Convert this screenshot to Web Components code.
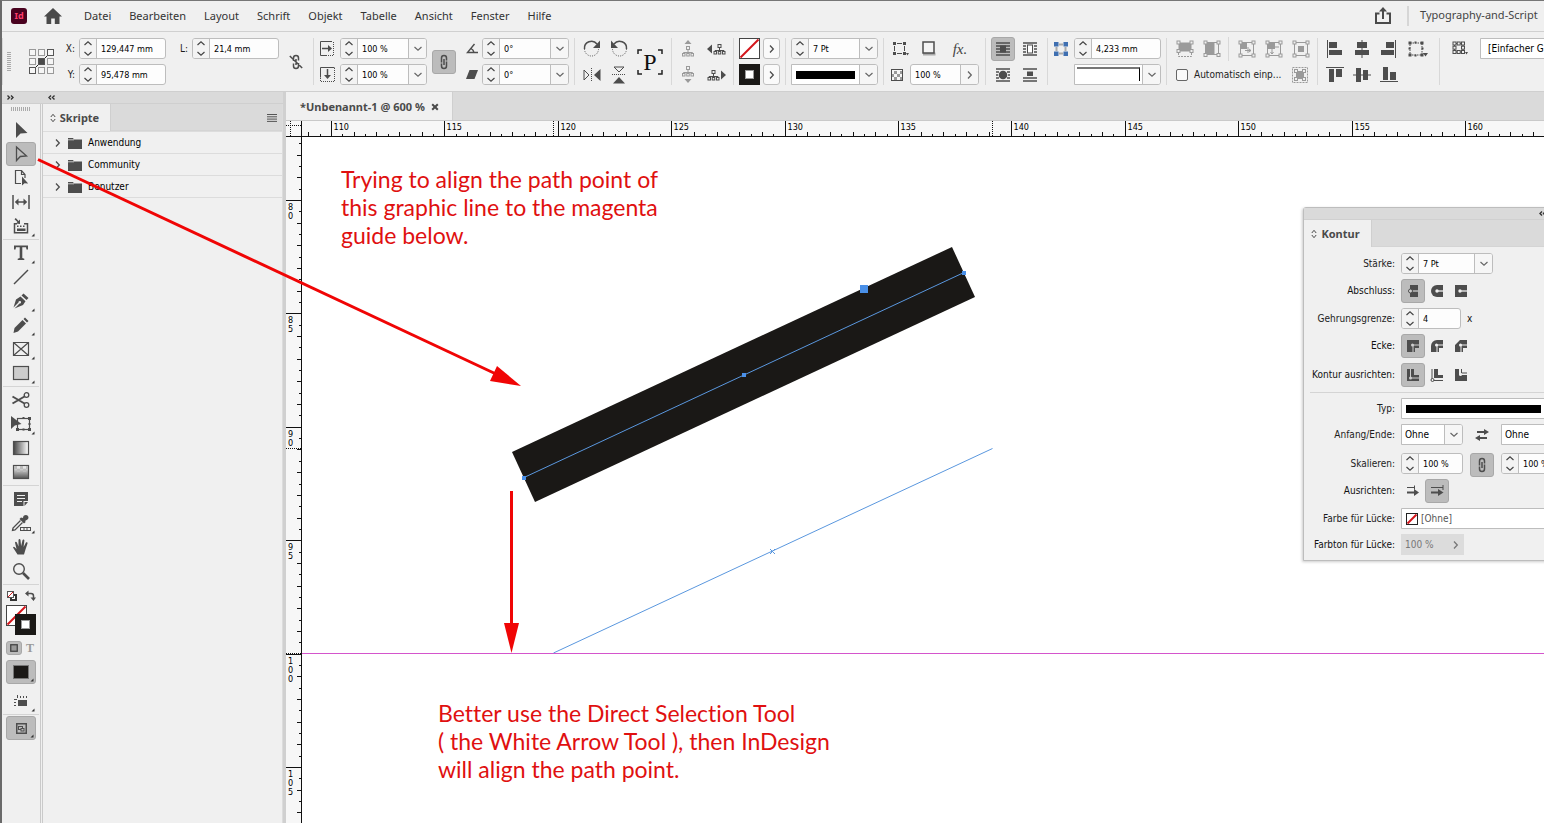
<!DOCTYPE html>
<html lang="de">
<head>
<meta charset="utf-8">
<title>InDesign</title>
<style>
html,body{margin:0;height:100%}
body{background:#f0f0f0;overflow:hidden}
</style>
</head>
<body>
<layout-app></layout-app>
<script>
const BASE = `
*{box-sizing:border-box}
:host{display:block;font-family:"DejaVu Sans Condensed","Liberation Sans",sans-serif;font-size:10px;line-height:14px;color:#1c1c1c}
button,input,select{font:inherit;color:inherit;margin:0;padding:0;border:0;background:none;border-radius:0;outline:0}
button{display:flex;align-items:center;justify-content:center;flex:none}
`;
function define(tag, css, html) {
  const tpl = document.createElement('template');
  if (typeof html === 'string') tpl.innerHTML = `<style>${BASE}${css}</style>${html}`;
  customElements.define(tag, class extends HTMLElement {
    constructor() { super(); this.attachShadow({mode: 'open'}); }
    connectedCallback() {
      if (this.shadowRoot.childNodes.length) return;
      if (typeof html === 'function') this.shadowRoot.innerHTML = `<style>${BASE}${css}</style>${html(this)}`;
      else this.shadowRoot.append(tpl.content.cloneNode(true));
    }
  });
}

/* ---------- icons: [width, height, content] ---------- */
const S = 'fill="none" stroke="currentColor"';
const knob = (pts) => pts.map(([x, y]) => `<rect x="${x - 1.5}" y="${y - 1.5}" width="3" height="3" fill="#f0f0f0" stroke="currentColor"/>`).join('');
const tree = (x, y) => `<g transform="translate(${x} ${y})" ${S}><rect x="4.5" y=".5" width="3" height="3"/><path d="M6 4v2.500M1.500 8V6.500h9V8M6 6.500V8"/><rect x=".5" y="7.500" width="2.500" height="2.500"/><rect x="4.750" y="7.500" width="2.500" height="2.500"/><rect x="9" y="7.500" width="2.500" height="2.500"/></g>`;
const ICONS = {
  up: [8, 5, `<path ${S} stroke-width="1.200" d="M.5 4L4 .8 7.500 4"/>`],
  down: [8, 5, `<path ${S} stroke-width="1.200" d="M.5 1L4 4.200 7.500 1"/>`],
  right: [5, 8, `<path ${S} stroke-width="1.300" d="M1 .5L4.300 4 1 7.500"/>`],
  collapse: [7, 5, `<path ${S} stroke-width="1.400" d="M3 .5L1 2.500l2 2M6.500 .5l-2 2 2 2"/>`],
  expand: [7, 5, `<path ${S} stroke-width="1.400" d="M.5 .5l2 2-2 2M4 .5l2 2-2 2"/>`],
  updown: [6, 10, `<path ${S} d="M.8 4L3 1.300 5.200 4M.8 6L3 8.700 5.200 6"/>`],
  home: [18, 16, `<path fill="currentColor" d="M9 0L0 8.500h2.500V16h4.700v-5.500h3.600V16h4.700V8.500H18z"/>`],
  share: [16, 18, `<path ${S} stroke-width="2" d="M4.500 6.500H1V16h14V6.500h-3.500M8 12V2"/><path fill="currentColor" d="M8 0l4 4.500H4z"/>`],
  gripv: [4, 20, Array.from({length: 10}, (_, i) => `<path stroke="#aaa" d="M0 ${i * 2 + .5}h4"/>`).join('')],
  griph: [20, 4, Array.from({length: 10}, (_, i) => `<path stroke="#aaa" d="M${i * 2 + .5} 0v4"/>`).join('')],
  refpt: [25, 25, `<path stroke="currentColor" d="M5 20L20 5"/>` + [0, 1, 2].flatMap(r => [0, 1, 2].map(c => `<rect x="${c * 9 + .5}" y="${r * 9 + .5}" width="6" height="6" fill="${r === 1 && c === 1 ? '#4a4a4a' : '#f6f6f6'}" stroke="${r + c === 2 ? '#555' : '#999'}"/>`)).join('')],
  unlink: [14, 16, `<path ${S} stroke-width="1.500" d="M4.500 7V4a2.500 2.500 0 015 0v2.500M9.500 9v3a2.500 2.500 0 01-5 0V9.500M7 5v6M.8 2l12.400 12"/>`],
  link: [10, 16, `<path ${S} stroke-width="1.500" d="M2.500 8.500V4a2.500 2.500 0 015 0v2.500M7.500 7.500V12a2.500 2.500 0 01-5 0V9.500M5 5v6"/>`],
  scalex: [15, 15, `<path ${S} d="M12 .5H.5v14H6"/><path ${S} stroke-dasharray="1 1" d="M13.500 1v13.500M6 14.500h8"/><path ${S} stroke-width="1.500" d="M2 7.500h7"/><path fill="currentColor" d="M8 4l4 3.500L8 11z"/>`],
  scaley: [15, 15, `<path ${S} d="M14.500 .5H.5v10"/><path ${S} stroke-dasharray="1 1" d="M.5 11v3.500h14V1"/><path ${S} stroke-width="1.500" d="M7.500 2v7"/><path fill="currentColor" d="M4 8l3.500 4L11 8z"/>`],
  angle: [12, 11, `<path ${S} stroke-width="1.400" d="M8.500 1L1.500 9.500H12M5 5.500a6 6 0 013 4"/>`],
  shear: [12, 11, `<path fill="currentColor" d="M3.500 1h8.500L8.500 10H0z"/>`],
  rotcw: [18, 17, `<path ${S} stroke-width="1.500" d="M1.500 9A7 7 0 0114 4"/><path ${S} stroke-dasharray="1 1.300" d="M1.500 9a7 7 0 0014 0"/><path fill="currentColor" d="M17 .5V8h-7z"/>`],
  rotccw: [18, 17, `<path ${S} stroke-width="1.500" d="M16.500 9A7 7 0 004 4"/><path ${S} stroke-dasharray="1 1.300" d="M16.500 9a7 7 0 01-14 0"/><path fill="currentColor" d="M1 .5V8h7z"/>`],
  fliph: [18, 14, `<path ${S} d="M1 2v10l5-5z"/><path ${S} stroke-dasharray="1 1" d="M8.500 0v14"/><path fill="currentColor" d="M17.500 1v12l-6.500-6z"/>`],
  flipv: [14, 18, `<path ${S} d="M2 1h10L7 6z"/><path ${S} stroke-dasharray="1 1" d="M0 8.500h14"/><path fill="currentColor" d="M1 17.500h12L7 11z"/>`],
  corners: [26, 26, `<path fill="none" stroke="#222" stroke-width="1.500" d="M1 5V1h4M21 1h4v4M25 21v4h-4M5 25H1v-4"/>`],
  treeup: [14, 17, `<path fill="currentColor" d="M3.500 4L7 0l3.500 4z"/>` + tree(1, 6)],
  treedown: [14, 17, tree(1, 0) + `<path fill="currentColor" d="M3.500 13L7 17l3.500-4z"/>`],
  treeleft: [19, 12, `<path fill="currentColor" d="M5 1.500L0 6l5 4.500z"/>` + tree(6.5, 1)],
  treeright: [19, 12, tree(.5, 1) + `<path fill="currentColor" d="M14 1.500L19 6l-5 4.500z"/>`],
  none: [21, 21, `<rect x=".5" y=".5" width="20" height="20" fill="#fff" stroke="#444"/><path stroke="#d4151b" stroke-width="2" d="M1.500 19.500l18-18"/>`],
  nonesm: [12, 12, `<rect x=".5" y=".5" width="11" height="11" fill="#fff" stroke="#222"/><path stroke="#d4151b" stroke-width="2" d="M1.500 10.500l9-9"/>`],
  stroke: [21, 21, `<rect width="21" height="21" fill="#1a1816"/><rect x="6.500" y="6.500" width="8" height="8" fill="#fff" stroke="#999"/>`],
  cornopt: [16, 14, `<path ${S} d="M4 1.500h5M11.500 4v5M4 11.500h5M1.500 4v5"/><path fill="currentColor" d="M0 0h3v3H0zM10 0h3v3h-3zM0 10h3v3H0zM10 10h3v3h-3zM13 11h3l-1.500 2.500z"/>`],
  shadow: [14, 15, `<rect x="1" y="11.500" width="12.500" height="3" fill="#aaa"/><rect x="1" y="1" width="11" height="11" fill="#f4f4f4" stroke="currentColor" stroke-width="1.500"/>`],
  check: [12, 12, `<rect x=".5" y=".5" width="11" height="11" fill="#f6f6f6" stroke="currentColor"/><path fill="#999" d="M3 2h3v3H3zM6 5h3v3H6zM1 5h2v3H1zM9 2h2v3H9zM3 8h3v3H3zM9 8h2v3H9z"/>`],
  wrap1: [14, 14, `<path stroke="currentColor" stroke-width="1.300" d="M0 1h14M0 4h14M0 7h14M0 10h14M0 13h14"/><rect x="4" y="3.500" width="6" height="7" fill="currentColor"/>`],
  wrap2: [14, 14, `<path stroke="currentColor" stroke-width="1.300" d="M0 1h14M0 4h3M11 4h3M0 7h3M11 7h3M0 10h3M11 10h3M0 13h14"/><rect x="4.500" y="3" width="5" height="8" fill="#fff" stroke="currentColor"/>`],
  wrap3: [14, 14, `<path stroke="currentColor" stroke-width="1.300" d="M0 1h14M0 4h3M11 4h3M0 7h2M12 7h2M0 10h3M11 10h3M0 13h14"/><circle cx="7" cy="7" r="4.300" fill="currentColor"/>`],
  wrap4: [14, 14, `<path stroke="currentColor" stroke-width="1.300" d="M0 1h14M0 10h14M0 13h14"/><path fill="currentColor" d="M4 3.500h6V8H4z"/>`],
  fitbox: [14, 14, `<path stroke="#aaa" stroke-width="2" fill="none" d="M5 2.500h4M5 11.500h4M2.500 5v4M11.500 5v4"/><path fill="#3f6fb0" d="M0 0h4.500v4.500H0zM9.500 0H14v4.500H9.500zM0 9.500h4.500V14H0zM9.500 9.500H14V14H9.500z"/>`],
  fit1: [16, 16, `<rect x="1.500" y="1.500" width="13" height="9" fill="currentColor"/>` + knob([[1.5, 1.5], [14.5, 1.5], [1.5, 10], [14.5, 10]]) + `<path ${S} stroke-dasharray="2 1" d="M1.500 12v3.500h13V12"/>`],
  fit2: [16, 16, `<rect x="1.500" y="1.500" width="9" height="12" fill="currentColor"/><rect x="1.500" y="1.500" width="13" height="12" ${S}/>` + knob([[1.5, 1.5], [14.5, 1.5], [1.5, 14], [14.5, 14]])],
  fit3: [16, 16, `<path fill="currentColor" d="M2 2h6v6H2z"/><rect x="1.500" y="1.500" width="13" height="13" ${S}/><path ${S} d="M6 9.500h6M9 6v6M10 8l2 1.500L10 11"/>` + knob([[1.5, 1.5], [14.5, 1.5], [1.5, 14.5], [14.5, 14.5]])],
  fit4: [16, 16, `<path fill="currentColor" d="M2 2h7v6H2z"/><rect x="1.500" y="1.500" width="13" height="13" ${S}/><path ${S} d="M6 8v5M4.500 11L6 13l1.500-2M9 6h4"/>` + knob([[1.5, 1.5], [14.5, 1.5], [1.5, 14.5], [14.5, 14.5]])],
  fit5: [16, 16, `<path fill="currentColor" d="M5 5h6v6H5z"/><rect x="1.500" y="1.500" width="13" height="13" ${S}/>` + knob([[1.5, 1.5], [14.5, 1.5], [1.5, 14.5], [14.5, 14.5]])],
  fit6: [16, 16, `<rect x=".5" y=".5" width="15" height="15" ${S} stroke-dasharray="2 1"/><path fill="currentColor" d="M4 4h8v8H4z"/>` + knob([[4, 4], [12, 4], [4, 12], [12, 12]])],
  all: [15, 18, `<path stroke="currentColor" d="M.5 0v18"/><path fill="currentColor" d="M2 2h8v6H2zM2 10h13v5H2z"/>`],
  ahc: [14, 18, `<path stroke="currentColor" d="M7 0v18"/><path fill="currentColor" d="M2 2h10v6H2zM0 10h14v5H0z"/>`],
  alr: [15, 18, `<path stroke="currentColor" d="M14.500 0v18"/><path fill="currentColor" d="M5 2h8v6H5zM0 10h13v5H0z"/>`],
  alt: [18, 15, `<path stroke="currentColor" d="M0 .5h18"/><path fill="currentColor" d="M3 2h5v13H3zM10 2h6v8h-6z"/>`],
  avc: [18, 14, `<path stroke="currentColor" d="M0 7h18"/><path fill="currentColor" d="M3 0h5v14H3zM10 2h5v10h-5z"/>`],
  alb: [18, 15, `<path stroke="currentColor" d="M0 14.500h18"/><path fill="currentColor" d="M3 0h5v13H3zM10 5h6v8h-6z"/>`],
  alignto: [20, 16, `<rect x="2" y="2" width="12" height="12" ${S} stroke-dasharray="1.500 1"/><path fill="currentColor" d="M.5 .5h3v3h-3zM12.500 .5h3v3h-3zM.5 12.500h3v3h-3zM12.500 12.500h3v3h-3zM6.500 .5h2v2h-2zM6.500 13.500h2v2h-2zM.5 6.500h2v2h-2zM13.500 6.500h2v2h-2zM15 12h5l-2.500 3.500z"/>`],
  objstyle: [15, 13, `<g ${S}><rect x="1.500" y="1.500" width="8.500" height="8.500"/></g>` + knob([[1.5, 1.5], [5.7, 1.5], [10, 1.5], [1.5, 5.7], [10, 5.7], [1.5, 10], [5.7, 10], [10, 10]]) + `<path fill="currentColor" d="M12 10h3l-1.500 2.500z"/>`],
  menu: [10, 8, `<path stroke="currentColor" d="M0 .5h10M0 2.800h10M0 5.100h10M0 7.400h10"/>`],
  folder: [14, 11, `<path fill="currentColor" d="M0 0h5l1 1.500h8V11H0z"/><path stroke="#e8e8e8" d="M0 1.800h6" stroke-width=".8"/>`],
  close: [8, 8, `<path stroke="currentColor" stroke-width="2" d="M1.200 1.200l5.600 5.600M6.800 1.200L1.200 6.800"/>`],
  /* tools */
  t_select: [18, 18, `<path fill="currentColor" d="M4 1v16l4.500-4.500L15.500 12z"/>`],
  t_direct: [18, 18, `<path ${S} stroke-width="1.300" d="M4.500 2v13.500l3.800-4 6.200-.5z"/>`],
  t_page: [18, 18, `<path ${S} stroke-width="1.200" d="M9 14.500H3.500v-13h6l3.500 4V9M9.500 1.500V5.500H13"/><path fill="currentColor" d="M10 7.500v9l2.500-2.300 3.700.3z"/>`],
  t_gap: [18, 16, `<path ${S} stroke-width="1.500" d="M1 1v14M17 1v14M4 8h10"/><path fill="currentColor" d="M6.500 4.500L2.800 8l3.700 3.500zM11.500 4.500L15.200 8l-3.700 3.500z"/>`],
  t_content: [18, 18, `<path ${S} stroke-width="1.500" d="M5 6.800H2.500v9h13v-9H12"/><path fill="currentColor" d="M5 8.500h1.500V10H5zM8 8.500h1.500V10H8zM11 8.500h1.500V10H11zM5 11.500h8.500V14H5zM8 7V2.500L6.500 4 3.800 1 2.500 2.300l3 2.700L4 6.500z"/>`],
  t_type: [18, 18, `<path fill="currentColor" d="M2 1.500h14v4h-1.500L14 3.300h-3.700V14l2 .7V16H5.700v-1.300l2-.7V3.300H4L3.500 5.500H2z"/>`],
  t_line: [18, 18, `<path stroke="currentColor" stroke-width="1.500" d="M2 16L16 2"/>`],
  t_pen: [18, 18, `<path fill="currentColor" d="M11.500 1.500l5 4.500-2 2-5-4.500zM8.500 4.500l5 4.800L11 13l-8.500 3.500 5-5a1.300 1.300 0 10-1-1L1.500 15.500 4 7.500z"/>`],
  t_pencil: [18, 18, `<path fill="currentColor" d="M13 1.500L16.500 5 15 6.500 11.500 3zM10.500 4L14 7.500 6 15.500 1.500 17 2.500 12z"/>`],
  t_frame: [18, 18, `<path ${S} stroke-width="1.200" d="M1.500 2.500h15v13h-15zM1.500 2.500l15 13M16.500 2.500l-15 13"/>`],
  t_rect: [18, 18, `<rect x="1.500" y="2.500" width="15" height="13" fill="#ccc" stroke="currentColor" stroke-width="1.200"/>`],
  t_scis: [18, 18, `<g ${S} stroke-width="1.300"><circle cx="14.500" cy="4" r="2.300"/><circle cx="14.500" cy="14" r="2.300"/></g><path ${S} stroke-width="2" d="M.5 5.500l12 7M.5 12.500l12-7"/>`],
  t_free: [20, 18, `<rect x="6.500" y="3.500" width="12" height="11" ${S} stroke-width="1.200"/><path fill="currentColor" d="M17 2h3v3h-3zM17 13h3v3h-3zM5 13h3v3H5zM11.500 2h2v2h-2zM11.500 13.500h2v2h-2zM17.500 8h2v2h-2zM0 1v13l3.800-3.500L10.500 9z"/>`],
  t_grad: [18, 18, `<defs><linearGradient id="g"><stop stop-color="#444"/><stop offset="1" stop-color="#fff"/></linearGradient></defs><rect x="1.500" y="2.500" width="15" height="13" fill="url(#g)" stroke="currentColor" stroke-width="1.200"/>`],
  t_feather: [18, 18, `<defs><linearGradient id="h" x2="0" y2="1"><stop stop-color="#fff"/><stop offset="1" stop-color="#555"/></linearGradient></defs><rect x="1.500" y="2.500" width="15" height="13" fill="url(#h)" stroke="currentColor" stroke-width="1.200"/><path fill="#bbb" d="M2 3h3v3H2zM8 3h3v3H8zM14 3h2v3h-2zM5 6h3v3H5zM11 6h3v3h-3z"/>`],
  t_note: [18, 18, `<path fill="currentColor" d="M2 2h14v9h-4.500v5H2zM12.500 12H16l-3.500 4z"/><path stroke="#f0f0f0" stroke-width="1.200" d="M5 5.500h8M5 8.500h8M5 11.500h5"/>`],
  t_eye: [20, 18, `<path fill="currentColor" d="M12 4a3 3 0 013-3 2.500 2.500 0 011.500 4.500L14 7l.7 1-1.700 1.500L8.500 5 10 3.500z"/><path ${S} stroke-width="1.300" d="M9.500 6.500L2 14l-.5 2.500L4 16l7.500-7.500"/><rect x="9.500" y="13.500" width="10" height="3" fill="#f0f0f0" stroke="currentColor"/><path stroke="currentColor" d="M13 13v4M16 13v4"/>`],
  t_hand: [18, 18, `<path fill="currentColor" d="M5.500 16.500L1 9.500c.5-1 1.500-.7 2 0l1.500 1.500L3 4.500c.3-1.300 1.500-1 1.900 0L6.500 8.500 6.500 2c.3-1.300 1.800-1.300 2 0l.6 6L10.500 2.200c.5-1.200 1.900-.8 1.900.4L11.600 9l2.200-4.200c.7-1 2-.4 1.700.7L13.500 11.500l-1.500 5z"/>`],
  t_zoom: [18, 18, `<circle cx="7" cy="7" r="5.300" ${S} stroke-width="1.400"/><path stroke="currentColor" stroke-width="2.600" d="M11 11l6 6"/>`],
  swatchsm: [10, 10, `<rect x="4" y="4" width="5" height="5" fill="#fff" stroke="#333" stroke-width="2"/><rect x=".5" y=".5" width="6" height="6" fill="#fff" stroke="#555"/><path stroke="#d4151b" d="M1 6l5-5"/>`],
  swap: [11, 11, `<path ${S} stroke-width="1.500" d="M3 3.500h3q2.500 0 2.500 2.500v2"/><path fill="currentColor" d="M3.500 .5v6L0 3.500zM5.500 7.500H11L8.500 11z"/>`],
  contain: [8, 8, `<rect x=".75" y=".75" width="6.500" height="6.500" fill="#999" stroke="#444" stroke-width="1.300"/>`],
  black: [16, 14, `<rect x=".5" y=".5" width="15" height="13" fill="#1a1816" stroke="#777"/>`],
  viewmode: [14, 12, `<path fill="currentColor" d="M4 5h9v6H4zM0 4h3v1H0zM0 7h2v1H0zM0 10h2v1H0zM3 0h1v3H3zM6 1h1v2H6zM9 1h1v2H9zM12 1h1v2h-1z"/>`],
  present: [11, 11, `<rect x=".75" y=".75" width="9.500" height="9.500" ${S} stroke-width="1.500"/><rect x="2.500" y="3.500" width="4" height="3" ${S}/><rect x="5" y="5.500" width="3" height="2.500" fill="#bbb" stroke="currentColor"/>`],
  corner: [4, 4, `<path fill="#333" d="M3.500 .5v3h-3z"/>`],
  /* stroke panel */
  cap1: [12, 14, `<path fill="currentColor" d="M3 1h8v12H3z"/><path stroke="#ccc" stroke-width="1.300" d="M4 7h7"/><path fill="#bcbcbc" d="M0 4.500h3v5H0z"/><circle cx="3.500" cy="7" r="2" fill="#ccc" stroke="currentColor"/>`],
  cap2: [12, 14, `<path fill="currentColor" d="M12 1v12H6A6 6 0 016 1z"/><path stroke="#f0f0f0" stroke-width="1.300" d="M6 7h6"/><circle cx="6" cy="7" r="1.700" fill="#f0f0f0"/>`],
  cap3: [12, 14, `<path fill="currentColor" d="M0 1h12v12H0z"/><path stroke="#f0f0f0" stroke-width="1.300" d="M5 7h7"/><circle cx="5" cy="7" r="1.700" fill="#f0f0f0"/>`],
  join1: [12, 14, `<path fill="currentColor" d="M0 1h12v8H8v4H0z"/><path fill="none" stroke="#ccc" d="M6 13V6h6"/><circle cx="5.500" cy="6" r="1.500" fill="#ccc"/>`],
  join2: [12, 14, `<path fill="currentColor" d="M6 1h6v8H8v4H0V7a6 6 0 016-6z"/><path fill="none" stroke="#f0f0f0" d="M6 13V6h6"/><circle cx="5.500" cy="6" r="1.500" fill="#f0f0f0"/>`],
  join3: [12, 14, `<path fill="currentColor" d="M5 1h7v8H8v4H0V6z"/><path fill="none" stroke="#f0f0f0" d="M6 13V6h6"/><circle cx="5.500" cy="6" r="1.500" fill="#f0f0f0"/>`],
  al1: [12, 14, `<path fill="currentColor" d="M0 1h7v6h5v6H0z"/><path fill="none" stroke="#ccc" d="M3.500 1v9H12"/><circle cx="3.500" cy="10" r="1.500" fill="#ccc"/>`],
  al2: [12, 14, `<path fill="currentColor" d="M3 1h4v6h5v3H3z"/><path fill="none" stroke="currentColor" d="M1 1v11.500h11"/><circle cx="1.500" cy="12" r="1.500" fill="#f0f0f0" stroke="currentColor"/>`],
  al3: [12, 14, `<path fill="currentColor" d="M0 1h4v6h8v6H0z"/><path fill="none" stroke="currentColor" d="M6.500 1v4H12"/><circle cx="5.500" cy="6.500" r="1.500" fill="#f0f0f0"/>`],
  swaph: [14, 12, `<path ${S} stroke-width="2" d="M2 3h8M4 9h8"/><path fill="currentColor" d="M9 0l5 3-5 3zM5 6L0 9l5 3z"/>`],
  arr1: [12, 12, `<path ${S} d="M0 2.500h7M7.500 .5v4"/><path ${S} stroke-width="2" d="M0 7.500h8"/><path fill="currentColor" d="M7 4l5 3.500L7 11z"/>`],
  arr2: [13, 12, `<path ${S} d="M0 2.500h12M12 0v5"/><path ${S} stroke-width="2" d="M0 7.500h8"/><path fill="currentColor" d="M7 4l5.500 3.500L7 11z"/>`]
};
define('ui-icon', ':host{display:block;flex:none;color:inherit}svg{display:block;overflow:visible}',
  el => { const [w, h, c] = ICONS[el.getAttribute('name')]; return `<svg width="${w}" height="${h}" viewBox="0 0 ${w} ${h}" aria-hidden="true">${c}</svg>`; });
const I = n => `<ui-icon name="${n}"></ui-icon>`;

/* ---------- number / list field ---------- */
define('num-field', `
:host{display:flex;align-items:center;height:21px}
label{flex:none;width:var(--lw);padding-right:var(--lp,4px);text-align:right;white-space:nowrap}
.box{display:flex;flex:none;width:var(--fw,87px);height:21px;border:1px solid #bdbdbd;border-radius:3px;background:#fdfdfd;overflow:hidden}
.spin{display:flex;flex-direction:column;flex:none;width:17px;border-right:1px solid #bdbdbd;background:#f3f3f3;color:#444}
.spin button{flex:1;width:16px}
input{flex:1;min-width:0;padding-left:4px;font-size:9px;color:#000}
.more{width:18px;border-left:1px solid #bdbdbd;background:#f6f6f6;color:#666}
`, el => {
  const a = n => el.getAttribute(n), cap = a('caption');
  return `${cap ? `<label for="f">${cap}</label>` : ''}<div class="box">${el.hasAttribute('plain') ? '' : `<div class="spin"><button aria-label="Erhöhen">${I('up')}</button><button aria-label="Verringern">${I('down')}</button></div>`}<input id="f" value="${a('value')}"${cap ? '' : ` aria-label="${a('label')}"`}>${a('more') ? `<button class="more" aria-label="Auswahl">${I(a('more'))}</button>` : ''}</div>`;
});
define('list-box', `
:host{display:flex;align-items:center;height:21px}
label{flex:none;width:var(--lw);padding-right:var(--lp,4px);text-align:right;white-space:nowrap}
.box{position:relative;display:flex;flex:none;width:var(--fw,87px);height:21px;border:1px solid #bdbdbd;border-radius:0 3px 3px 0;background:#fff;overflow:hidden}
select{appearance:none;flex:1;min-width:0;padding-left:var(--pl,3px);height:19px;color:var(--fg,#000)}
.more{display:flex;align-items:center;justify-content:center;width:18px;border-left:1px solid #bdbdbd;background:#f6f6f6;color:#666}
.pic{position:absolute;inset:0 18px 0 0;padding:6px 4px;pointer-events:none}
.bar{height:8px;background:#000}
.pic.corner{padding:2px}
.cor{height:14px;border-top:2px solid #777;border-right:1px solid #000}
.sw{position:absolute;left:4px;top:4px}
`, el => {
  const a = n => el.getAttribute(n), cap = a('caption'), p = a('pic');
  const pic = p === 'bar' ? '<div class="pic"><div class="bar"></div></div>' : p === 'corner' ? '<div class="pic corner"><div class="cor"></div></div>' : p === 'none' ? `<div class="sw">${I('nonesm')}</div>` : '';
  return `${cap ? `<label for="f">${cap}</label>` : ''}<div class="box"><select id="f"${cap ? '' : ` aria-label="${a('label')}"`}><option>${a('value') || ''}</option></select>${pic}${el.hasAttribute('open-end') ? '' : `<span class="more">${I('down')}</span>`}</div>`;
});

/* ---------- menu bar ---------- */
define('menu-bar', `
:host{display:flex;align-items:center;height:31px;padding-left:9px;border-bottom:1px solid #d0d0d0;font:11px/16px "Noto Sans","Open Sans",sans-serif;color:#333}
.logo{width:16px;height:16px;border-radius:3px;background:#49021f;color:#ff3b6b;font-size:9px;font-weight:700;line-height:16px;text-align:center}
.home{margin-left:17px;color:#4a4a4a}
nav{display:flex;gap:18px;margin-left:22px}
.share{margin-left:auto;color:#4a4a4a}
.doc{width:137px;height:20px;margin-left:16px;padding-left:11px;border-left:2px solid #d6d6d6;line-height:18px;white-space:nowrap;color:#444}
`, `<div class="logo">Id</div><button class="home" aria-label="Startseite">${I('home')}</button>
<nav>${['Datei', 'Bearbeiten', 'Layout', 'Schrift', 'Objekt', 'Tabelle', 'Ansicht', 'Fenster', 'Hilfe'].map(t => `<button>${t}</button>`).join('')}</nav>
<button class="share" aria-label="Freigeben">${I('share')}</button><div class="doc">Typography-and-Script</div>`);

/* ---------- control bar ---------- */
define('control-bar', `
:host{display:flex;height:60px;padding:6px 0;border-bottom:1px solid #cfcfcf;color:#222;overflow:hidden}
section{display:grid;grid-template-rows:21px 21px;row-gap:5px;flex:none;align-items:center;justify-items:center;border-left:1px solid #d8d8d8}
section:first-child{border:0}
section>ui-icon,button,.r>ui-icon{color:#4d4d4d}
.span{grid-row:1/3}
.k1{grid-column:1}.k2{grid-column:2}.k3{grid-column:3}.k5{grid-column:5}
.r{display:flex;align-items:center;justify-self:stretch}
.r>*{flex:none}
.c{display:flex;justify-content:center;width:27px;color:#4d4d4d}
.on{width:24px;height:24px;border:1px solid #a8a8a8;border-radius:3px;background:#bcbcbc}
.go{width:17px;height:21px;border:1px solid #c0c0c0;border-radius:3px;background:#fafafa}
.dim,section>.dim{color:#9a9a9a}
.sep{width:1px;height:24px;margin:0 4px 0 3px;background:#d8d8d8}
.para{display:grid;place-items:center;color:#111;font:24px/26px "Liberation Serif",serif}
.para>*{grid-area:1/1}
.fx{font:italic 15px/16px "Liberation Serif",serif;color:#444;justify-content:center}
input[type=checkbox]{appearance:none;width:12px;height:12px;border:1px solid #666;border-radius:2px;background:#fafafa}
.txt{width:98px;padding-left:6px}
.last{flex:1;min-width:0;overflow:hidden}
`, `
<section style="grid-template-columns:12px 39px 112px 113px 34px">
 <span class="span k1">${I('gripv')}</span><span class="span k2" style="justify-self:end">${I('refpt')}</span>
 <num-field caption="X:" value="129,447 mm" style="--lw:25px"></num-field><num-field caption="L:" value="21,4 mm" style="--lw:26px"></num-field>
 <button class="span k5" aria-label="Proportionen">${I('unlink')}</button>
 <num-field caption="Y:" value="95,478 mm" style="--lw:25px;grid-area:2/3"></num-field>
</section>
<section style="grid-template-columns:26px 87px 34px 21px 87px;padding-right:5px">
 ${I('scalex')}<num-field label="Skalierung X" value="100 %" more="down"></num-field><button class="span k3 on" aria-label="Skalierung verknüpfen">${I('link')}</button>${I('angle')}<num-field label="Drehwinkel" value="0°" more="down"></num-field>
 ${I('scaley')}<num-field label="Skalierung Y" value="100 %" more="down"></num-field>${I('shear')}<num-field label="Scherwinkel" value="0°" more="down"></num-field>
</section>
<section style="grid-template-columns:34px 20px 42px">
 <button aria-label="90° rechts">${I('rotcw')}</button><button aria-label="90° links">${I('rotccw')}</button><div class="span k3 para">${I('corners')}<span>P</span></div>
 <button aria-label="Horizontal spiegeln">${I('fliph')}</button><button aria-label="Vertikal spiegeln">${I('flipv')}</button>
</section>
<section style="grid-template-columns:32px 24px;padding-right:5px">
 <button class="dim" aria-label="Container">${I('treeup')}</button><button aria-label="Zurück">${I('treeleft')}</button>
 <button class="dim" aria-label="Inhalt">${I('treedown')}</button><button aria-label="Weiter">${I('treeright')}</button>
</section>
<section style="grid-template-columns:21px 17px;column-gap:3px;padding:0 5px">
 <button aria-label="Fläche">${I('none')}</button><button class="go" aria-label="Flächenfarbe">${I('right')}</button>
 <button aria-label="Kontur">${I('stroke')}</button><button class="go" aria-label="Konturfarbe">${I('right')}</button>
</section>
<section style="padding:0 5px">
 <num-field label="Konturstärke" value="7 Pt" more="down"></num-field>
 <list-box label="Konturtyp" pic="bar"></list-box>
</section>
<section style="padding:0 6px;width:102px">
 <div class="r"><button style="width:22px" aria-label="Eckenoptionen">${I('cornopt')}</button><button style="width:34px" aria-label="Schlagschatten">${I('shadow')}</button><button class="fx" style="width:28px">fx.</button></div>
 <div class="r"><span class="c" style="width:14px;margin-right:6px">${I('check')}</span><num-field plain label="Deckkraft" value="100 %" more="right" style="--fw:69px"></num-field></div>
</section>
<section style="grid-template-columns:24px 24px;column-gap:3px;padding:0 5px">
 <button class="on" aria-label="Kein Umfluss">${I('wrap1')}</button><button aria-label="Umfluss um Rahmen">${I('wrap2')}</button>
 <button aria-label="Umfluss um Form">${I('wrap3')}</button><button aria-label="Objekt überspringen">${I('wrap4')}</button>
</section>
<section style="grid-template-columns:26px 87px;padding-right:5px">
 ${I('fitbox')}<num-field label="Eckengröße" value="4,233 mm"></num-field>
 <span></span><list-box label="Eckenform" pic="corner"></list-box>
</section>
<section style="padding:0 3px 0 4px">
 <div class="r"><span class="c dim">${I('fit1')}</span><span class="c dim">${I('fit2')}</span><i class="sep"></i><span class="c dim">${I('fit3')}</span><span class="c dim">${I('fit4')}</span><span class="c dim">${I('fit5')}</span></div>
 <div class="r" style="padding-left:5px"><input type="checkbox" id="auto"><label class="txt" for="auto">Automatisch einp...</label><span class="c dim">${I('fit6')}</span></div>
</section>
<section style="grid-template-columns:27px 27px 27px 32px;padding:0 5px 0 3px">
 <button aria-label="Links">${I('all')}</button><button aria-label="Mitte">${I('ahc')}</button><button aria-label="Rechts">${I('alr')}</button><button aria-label="Ausrichten an">${I('alignto')}</button>
 <button aria-label="Oben">${I('alt')}</button><button aria-label="Vertikal Mitte">${I('avc')}</button><button aria-label="Unten">${I('alb')}</button>
</section>
<section class="last" style="grid-template-columns:40px 1fr">
 ${I('objstyle')}<list-box open-end label="Objektformat" value="[Einfacher G" style="--fw:87px;--pl:7px;justify-self:start"></list-box>
</section>`);

/* ---------- tool strip ---------- */
const tool = (n, o = {}) => `<button class="t${o.on ? ' on' : ''}" aria-label="${n}">${I(n)}${o.more ? `<span class="m">${I('corner')}</span>` : ''}</button>`;
define('tool-strip', `
:host{display:flex;flex-direction:column;align-items:center;width:39px;flex:none;border-right:1px solid #cacaca;color:#4d4d4d}
.grip{height:14px;padding-top:3px}
.t{position:relative;width:30px;height:24px;color:#4d4d4d}
.on{border:1px solid #a8a8a8;border-radius:3px;background:#bcbcbc}
.m{position:absolute;right:1px;bottom:1px}
hr{width:36px;height:1px;margin:1px 0;border:0;background:#d4d4d4}
.row{display:flex;width:30px;justify-content:space-between;align-items:center}
.mini{height:19px;padding-left:1px}
.fs{position:relative;width:30px;height:30px}
.fs .s{position:absolute;left:9px;top:9px}
.fmt{height:14px;margin:6px 0 5px}
.fmt button{width:16px;height:14px}
.fmt .tt{color:#999;font:700 12px/14px "Liberation Serif",serif}
.gap{height:5px}
`, `<div class="grip">${I('griph')}</div>
${tool('t_select')}${tool('t_direct', {on: 1})}${tool('t_page')}${tool('t_gap')}${tool('t_content', {more: 1})}<hr>
${tool('t_type', {more: 1})}${tool('t_line')}${tool('t_pen', {more: 1})}${tool('t_pencil', {more: 1})}${tool('t_frame', {more: 1})}${tool('t_rect', {more: 1})}<hr>
${tool('t_scis')}${tool('t_free', {more: 1})}${tool('t_grad')}${tool('t_feather')}<hr>
${tool('t_note')}${tool('t_eye', {more: 1})}${tool('t_hand')}${tool('t_zoom')}<hr>
<div class="row mini">${I('swatchsm')}${I('swap')}</div>
<div class="fs">${I('none')}<span class="s">${I('stroke')}</span></div>
<div class="row fmt"><button class="on" aria-label="Container">${I('contain')}</button><button class="tt">T</button></div>
${tool('black', {on: 1, more: 1})}<div class="gap"></div>${tool('viewmode', {more: 1})}<hr>${tool('present', {on: 1, more: 1})}`);

/* ---------- tab strip shared by panels ---------- */
define('panel-tabs', `
:host{display:flex;height:27px;background:#dadada;border-bottom:1px solid #d4d4d4}
button{gap:4px;width:68px;padding-right:4px;margin-bottom:-1px;background:#f0f0f0;border-right:1px solid #cfcfcf;color:#4a4a4a;font:700 11px/16px "Noto Sans","Open Sans",sans-serif}
.menu{margin:10px 5px 0 auto;color:#555}
`, el => `<button>${I('updown')}<span>${el.getAttribute('name')}</span></button>${el.hasAttribute('menu') ? `<div class="menu">${I('menu')}</div>` : ''}`);

define('scripts-panel', `
:host{flex:1;min-width:0;border-left:1px solid #cacaca;margin-left:1px;border-right:1px solid #dcdcdc}
ul{margin:0;padding:0;list-style:none;border-top:1px solid #dcdcdc}
li{display:flex;align-items:center;height:22px;padding:1px 0 0 12px;border-bottom:1px solid #dcdcdc;color:#000}
li ui-icon{color:#4d4d4d}
li ui-icon+ui-icon{margin:0 6px 0 8px}
`, `<panel-tabs name="Skripte" menu></panel-tabs>
<ul>${['Anwendung', 'Community', 'Benutzer'].map(t => `<li>${I('right')}${I('folder')}${t}</li>`).join('')}</ul>`);

define('side-dock', `
:host{display:flex;flex-direction:column;width:284px;flex:none;border-right:3px solid #d0d0d0}
header{display:flex;align-items:center;gap:34px;height:12px;padding-left:5px;background:#dadada;border-bottom:1px solid #cfcfcf;color:#333}
.cols{display:flex;flex:1;min-height:0}
`, `<header>${I('expand')}${I('collapse')}</header><div class="cols"><tool-strip></tool-strip><scripts-panel></scripts-panel></div>`);

/* ---------- rulers ---------- */
const MM = 22.68;
define('page-ruler', `
:host{background:#f7f7f7;overflow:hidden}
svg{display:block;width:100%;height:100%}
text{font-size:9px;fill:#000}
`, el => {
  const v = el.hasAttribute('vertical'), start = +el.getAttribute('start'), at = +el.getAttribute('at');
  const marks = el.getAttribute('marks').split(' ');
  const end = v ? innerHeight - 137 : innerWidth - 302;
  let s = '';
  for (let i = -12; ; i++) {
    const p = Math.round(at + i * MM / 2) + .5, len = i % 10 === 0 ? 16 : i % 2 ? 3 : 5;
    if (p < 0) continue;
    if (p > end) break;
    s += v ? `<path d="M${16 - len} ${p}H16"/>` : `<path d="M${p} ${16 - len}V16"/>`;
    if (i % 10 === 0) {
      const n = String(start + i / 2);
      s += v ? [...n].map((c, k) => `<text x="2" y="${p + 9 + k * 9}" stroke="none">${c}</text>`).join('') : `<text x="${p + 2}" y="9" stroke="none">${n}</text>`;
    }
  }
  s += marks.map(m => v ? `<path stroke-dasharray="1 1" d="M0 ${m}H16"/>` : `<path stroke-dasharray="1 1" d="M${m} 0V16"/>`).join('');
  s += v ? '<path d="M15.500 0V2000"/>' : '<path d="M0 15.500H4000"/>';
  return `<svg stroke="#111">${s}</svg>`;
});

/* ---------- drawing area ---------- */
define('doc-canvas', `
:host{position:relative;background:#fff;overflow:hidden}
svg{position:absolute;left:0;top:0;width:100%;height:100%}
p{position:absolute;margin:0;color:#e01010;font:23px/28px Lato,"Open Sans",sans-serif;font-variant-ligatures:none;white-space:nowrap}
`, `<svg><g transform="translate(-302 -137)">
<rect x="302" y="653" width="4000" height="1" fill="#d455cc"/>
<path d="M952 247L975 297 535 502 512 452z" fill="#1a1816"/>
<g stroke="#5a97de" fill="none"><path d="M524 477.500L964 272.500M553.500 653L992.500 448.500M770 549l5 5M775 549l-5 5"/></g>
<path fill="#4a90e8" d="M522 476h4v4h-4zM962 271h4v4h-4zM742 373h4v4h-4zM860 285h8v8h-8z"/>
<path d="M511.500 491V626" stroke="#f00505" stroke-width="3"/><path d="M504 623h15l-7.500 30z" fill="#f00505"/>
</g></svg>
<p style="left:39px;top:28px">Trying to align the path point of<br>this graphic line to the magenta<br>guide below.</p>
<p style="left:136px;top:562px">Better use the Direct Selection Tool<br>( the White Arrow Tool ), then InDesign<br>will align the path point.</p>`);

define('doc-window', `
:host{display:flex;flex-direction:column;flex:1;min-width:0}
.tabs{display:flex;height:29px;background:#dadada;border-bottom:1px solid #c9c9c9}
.tab{display:flex;align-items:center;gap:6px;width:167px;padding:1px 0 0 14px;background:#f0f0f0;border-right:1px solid #cfcfcf;color:#4a4a4a;font:700 11px/16px "Noto Sans","Open Sans",sans-serif;white-space:nowrap}
.grid{display:grid;flex:1;min-height:0;grid-template:16px 1fr/16px 1fr}
.zero{background:#f7f7f7;border-right:1px solid #111;border-bottom:1px solid #111}
.zero svg{display:block}
`, `<div class="tabs"><div class="tab"><span>*Unbenannt-1 @ 600 %</span><button aria-label="Schließen">${I('close')}</button></div></div>
<div class="grid"><div class="zero"><svg width="15" height="15" stroke="#111" stroke-dasharray="1 1"><path d="M4.500 0V15M0 4.500H15"/></svg></div>
<page-ruler start="110" at="29" marks="251.500 690.500"></page-ruler>
<page-ruler vertical start="80" at="63" marks="311.500 516.500"></page-ruler><doc-canvas></doc-canvas></div>`);

/* ---------- stroke panel ---------- */
define('stroke-panel', `
:host{width:260px;background:#f0f0f0;border:1px solid #bdbdbd;border-radius:3px 0 0 0;box-shadow:-1px 1px 3px #0003;--lw:97px;--lp:6px;color:#111}
header{display:flex;justify-content:flex-end;align-items:center;height:12px;padding-right:16px;background:#dadada;border-bottom:1px solid #d0d0d0;color:#333}
.body{display:flex;flex-direction:column;gap:5px;padding:6px 0 5px}
.row{display:flex;align-items:center}
.lab{width:97px;padding-right:6px;text-align:right;white-space:nowrap;flex:none}
.b{width:24px;height:24px;color:#4d4d4d}
.on{border:1px solid #a8a8a8;border-radius:3px;background:#bcbcbc}
hr{width:100%;height:1px;margin:0 0 0 6px;border:0;background:#d4d4d4}
.mid{width:38px;display:flex;justify-content:center;color:#4d4d4d;flex:none}
.tint{display:flex;align-items:center;justify-content:space-between;width:63px;height:21px;padding:0 6px 0 4px;background:#dcdcdc;color:#777}
.tint input{width:40px}
`, `<header>${I('collapse')}</header><panel-tabs name="Kontur"></panel-tabs>
<div class="body">
<num-field caption="Stärke:" value="7 Pt" more="down" style="--fw:92px"></num-field>
<div class="row"><span class="lab">Abschluss:</span><button class="b on" aria-label="Abgeflacht">${I('cap1')}</button><button class="b" aria-label="Abgerundet">${I('cap2')}</button><button class="b" aria-label="Überstehend">${I('cap3')}</button></div>
<div class="row"><num-field caption="Gehrungsgrenze:" value="4" style="--fw:60px"></num-field><span style="padding-left:6px">x</span></div>
<div class="row"><span class="lab">Ecke:</span><button class="b on" aria-label="Gehrung">${I('join1')}</button><button class="b" aria-label="Rund">${I('join2')}</button><button class="b" aria-label="Abgeflacht">${I('join3')}</button></div>
<div class="row"><span class="lab">Kontur ausrichten:</span><button class="b on" aria-label="Mitte">${I('al1')}</button><button class="b" aria-label="Innen">${I('al2')}</button><button class="b" aria-label="Außen">${I('al3')}</button></div>
<hr>
<list-box caption="Typ:" pic="bar" style="--fw:163px"></list-box>
<div class="row"><list-box caption="Anfang/Ende:" value="Ohne" style="--fw:62px"></list-box><span class="mid">${I('swaph')}</span><list-box label="Ende" value="Ohne" style="--fw:62px"></list-box></div>
<div class="row" style="align-items:flex-start;margin:3px 0 -3px"><num-field caption="Skalieren:" value="100 %" style="--fw:62px"></num-field><span class="mid"><button class="b on" aria-label="Verknüpfen">${I('link')}</button></span><num-field label="Skalieren Ende" value="100 %" style="--fw:62px"></num-field></div>
<div class="row"><span class="lab">Ausrichten:</span><button class="b" aria-label="Über Ende hinaus">${I('arr1')}</button><button class="b on" aria-label="Am Ende">${I('arr2')}</button></div>
<list-box caption="Farbe für Lücke:" value="[Ohne]" pic="none" open-end style="--fw:160px;--pl:19px;--fg:#555"></list-box>
<div class="row"><label class="lab" for="tint">Farbton für Lücke:</label><span class="tint"><input id="tint" value="100 %" disabled>${I('right')}</span></div>
</div>`);

define('layout-app', `
:host{position:relative;display:flex;flex-direction:column;height:100vh;border-top:1px solid #767676;border-left:2px solid #6a6a6a;background:#f0f0f0;overflow:hidden}
main{display:flex;flex:1;min-height:0}
stroke-panel{position:absolute;left:1301px;top:206px}
.arrow{position:absolute;left:-2px;top:-1px;width:600px;height:400px;pointer-events:none}
`, `<menu-bar></menu-bar><control-bar></control-bar><main><side-dock></side-dock><doc-window></doc-window></main>
<stroke-panel></stroke-panel>
<svg class="arrow"><path d="M38 159.500L496 374" stroke="#f00505" stroke-width="3"/><path d="M521 386L497 366 490 381z" fill="#f00505"/></svg>`);
</script>
</body>
</html>
